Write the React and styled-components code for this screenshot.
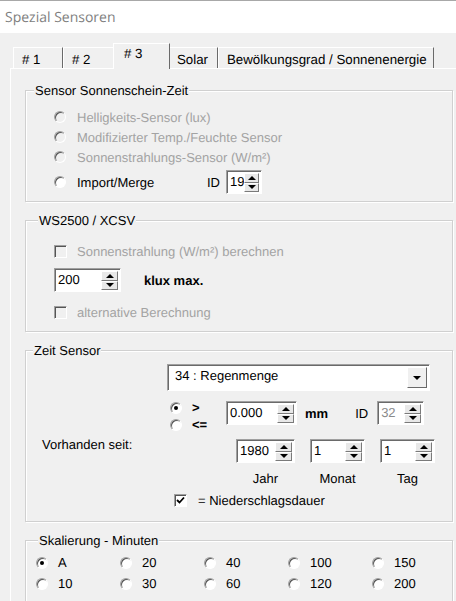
import React from 'react';
import styled, { createGlobalStyle } from 'styled-components';

const GlobalStyle = createGlobalStyle`
  html, body {
    margin: 0;
    padding: 0;
    background: #f0f0f0;
  }
  body {
    font-family: "Liberation Sans", Arial, sans-serif;
    font-size: 13px;
    color: #000;
    overflow: hidden;
    text-rendering: geometricPrecision;
  }
`;

const Window = styled.div`
  width: 456px;
  height: 601px;
  overflow: hidden;
  background: #f0f0f0;
`;

const TitleBar = styled.div`
  height: 32px;
  background: #fff;
  border-top: 1px solid #a8a8a8;
  display: flex;
  align-items: center;
  padding-left: 5px;
  font-family: "Open Sans", "Liberation Sans", sans-serif;
  font-size: 14px;
  color: #808080;
`;

const TabStrip = styled.div`
  height: 35px;
  display: flex;
  align-items: flex-end;
  padding-left: 13px;
`;

const Tab = styled.div`
  position: relative;
  box-sizing: border-box;
  width: ${p => p.$w}px;
  height: ${p => (p.$active ? 26 : 21)}px;
  margin: ${p => (p.$active ? '0 -2px -1px -2px' : '0')};
  z-index: ${p => (p.$active ? 2 : 1)};
  padding: ${p => (p.$active ? '2px 0 0 10px' : '4px 0 0 8px')};
  border-left: 1px solid #fff;
  border-top: 1px solid #fff;
  border-right: 1px solid #6a6a6a;
  background: #f0f0f0;
  font-size: 13.3px;
  line-height: 15px;
  white-space: nowrap;
`;

const Panel = styled.div`
  margin-left: 10px;
  border-left: 1px solid #fff;
  border-top: 1px solid #fff;
  padding: 21px 0 0 14px;
  height: 600px;
`;

const Group = styled.div`
  position: relative;
  box-sizing: border-box;
  width: 428px;
  height: ${p => p.$h}px;
  margin-bottom: 18px;
  border: 1px solid #d0d0d0;
  box-shadow: inset 1px 1px 0 #fff, 1px 1px 0 #fff;
  padding-top: ${p => p.$pt}px;
`;

const Legend = styled.span`
  position: absolute;
  top: -8px;
  left: ${p => p.$left}px;
  padding: 0 1px;
  background: #f0f0f0;
  line-height: 15px;
  white-space: nowrap;
`;

const Row = styled.div`
  display: flex;
  align-items: center;
  height: ${p => p.$h || 20}px;
  margin-top: ${p => p.$mt || 0}px;
  padding-left: ${p => p.$pl || 0}px;
`;

const Label = styled.span`
  margin-left: ${p => p.$ml || 0}px;
  width: ${p => (p.$w ? `${p.$w}px` : 'auto')};
  color: ${p => (p.$disabled ? '#a3a3a3' : '#000')};
  font-weight: ${p => (p.$bold ? 'bold' : 'normal')};
  white-space: nowrap;
  line-height: 15px;
`;

const RadioDot = styled.span`
  position: relative;
  flex: none;
  box-sizing: border-box;
  width: 12px;
  height: 12px;
  border-radius: 50%;
  border: 1px solid;
  border-color: #a0a0a0 #fff #fff #a0a0a0;
  box-shadow: inset 1px 1px 0 #555;
  background: ${p => (p.$disabled ? '#f0f0f0' : '#fff')};

  &::after {
    content: '';
    display: ${p => (p.$checked ? 'block' : 'none')};
    position: absolute;
    left: 3px;
    top: 3px;
    width: 4px;
    height: 4px;
    border-radius: 50%;
    background: #000;
  }
`;

const CheckBox = styled.span`
  flex: none;
  box-sizing: border-box;
  width: 13px;
  height: 13px;
  border: 1px solid;
  border-color: #a0a0a0 #fff #fff #a0a0a0;
  box-shadow: inset 1px 1px 0 #555;
  background: ${p => (p.$disabled ? '#f0f0f0' : '#fff')};
  display: flex;
  align-items: center;
  justify-content: center;
`;

const Field = styled.div`
  flex: none;
  box-sizing: border-box;
  display: flex;
  width: ${p => p.$w}px;
  height: ${p => p.$h || 24}px;
  margin-left: ${p => p.$ml || 0}px;
  margin-top: ${p => p.$mt || 0}px;
  border: 1px solid;
  border-color: #a0a0a0 #fff #fff #a0a0a0;
  box-shadow: inset 1px 1px 0 #6a6a6a;
  background: #fff;
`;

const FieldText = styled.span`
  flex: 1;
  padding: 3px 0 0 ${p => p.$pl || 3}px;
  line-height: 16px;
  color: ${p => (p.$disabled ? '#8a8a8a' : '#000')};
  white-space: nowrap;
`;

const SpinButtons = styled.div`
  display: flex;
  flex-direction: column;
  width: 17px;
  padding: 2px 2px 1px 0;
`;

const SpinBtn = styled.div`
  flex: 1;
  display: flex;
  align-items: center;
  justify-content: center;
  background: #e8e8e8;
  border: 1px solid;
  border-color: #fff #7a7a7a #7a7a7a #fff;
`;

const Triangle = styled.span`
  width: 0;
  height: 0;
  border-left: 4px solid transparent;
  border-right: 4px solid transparent;
  border-${p => (p.$down ? 'top' : 'bottom')}: 4px solid #000;
`;

const DropButton = styled.div`
  width: 18px;
  margin: 2px 2px 2px 0;
  display: flex;
  align-items: center;
  justify-content: center;
  background: #f0f0f0;
  border: 1px solid;
  border-color: #fff #6a6a6a #6a6a6a #fff;
`;

const CompareRow = styled.div`
  display: flex;
  align-items: flex-start;
  height: 34px;
  margin-top: 8px;
  padding-left: 144px;
`;

const RadioStack = styled.div`
  display: flex;
  flex-direction: column;
  width: 56px;
`;

const StackItem = styled.div`
  display: flex;
  align-items: center;
  height: 17px;
`;

const InlineLabel = styled(Label)`
  margin-top: 7px;
`;

const DateRow = styled.div`
  display: flex;
  align-items: flex-start;
  margin-top: 6px;
  padding-left: 16px;
`;

const DateLabel = styled(Label)`
  margin-top: -2px;
`;

const DateColumn = styled.div`
  display: flex;
  flex-direction: column;
  align-items: center;
  margin-right: 15px;
`;

const Caption = styled.span`
  margin-top: 8px;
  line-height: 15px;
`;

const ScaleGrid = styled.div`
  display: grid;
  grid-template-columns: repeat(5, 84px);
  grid-auto-rows: 21px;
  padding-left: 10px;
`;

const ScaleItem = styled.div`
  display: flex;
  align-items: center;
`;

function Radio({ label, checked, disabled, gap = 11, labelWidth, bold }) {
  return (
    <>
      <RadioDot $checked={checked} $disabled={disabled} />
      <Label $ml={gap} $w={labelWidth} $disabled={disabled} $bold={bold}>{label}</Label>
    </>
  );
}

function Check({ label, checked, disabled, gap = 10 }) {
  return (
    <>
      <CheckBox $disabled={disabled}>
        {checked && (
          <svg width="9" height="9" viewBox="0 0 9 9">
            <path d="M1 4 L3.5 6.5 L8 1.5" fill="none" stroke="#000" strokeWidth="1.8" />
          </svg>
        )}
      </CheckBox>
      <Label $ml={gap} $disabled={disabled}>{label}</Label>
    </>
  );
}

function Spin({ value, w, ml, mt, disabled }) {
  return (
    <Field $w={w} $ml={ml} $mt={mt}>
      <FieldText $disabled={disabled}>{value}</FieldText>
      <SpinButtons>
        <SpinBtn><Triangle /></SpinBtn>
        <SpinBtn><Triangle $down /></SpinBtn>
      </SpinButtons>
    </Field>
  );
}

const scale = ['A', '20', '40', '100', '150', '10', '30', '60', '120', '200'];

export default function App() {
  return (
    <Window>
      <GlobalStyle />
      <TitleBar>Spezial Sensoren</TitleBar>
      <TabStrip>
        <Tab $w={50}># 1</Tab>
        <Tab $w={52}># 2</Tab>
        <Tab $w={57} $active># 3</Tab>
        <Tab $w={50}>Solar</Tab>
        <Tab $w={216}>Bewölkungsgrad / Sonnenenergie</Tab>
      </TabStrip>
      <Panel>
        <Group $h={112} $pt={16}>
          <Legend $left={8}>Sensor Sonnenschein-Zeit</Legend>
          <Row $pl={28}><Radio label="Helligkeits-Sensor (lux)" disabled /></Row>
          <Row $pl={28}><Radio label="Modifizierter Temp./Feuchte Sensor" disabled /></Row>
          <Row $pl={28}><Radio label="Sonnenstrahlungs-Sensor (W/m²)" disabled /></Row>
          <Row $pl={28} $h={24} $mt={3}>
            <Radio label="Import/Merge" labelWidth={130} />
            <Label>ID</Label>
            <Spin value="19" w={36} ml={6} />
          </Row>
        </Group>

        <Group $h={112} $pt={20}>
          <Legend $left={12}>WS2500 / XCSV</Legend>
          <Row $pl={28}><Check label="Sonnenstrahlung (W/m²) berechnen" disabled /></Row>
          <Row $pl={28} $h={24} $mt={7}>
            <Spin value="200" w={67} />
            <Label $ml={23} $bold>klux max.</Label>
          </Row>
          <Row $pl={28} $mt={10}><Check label="alternative Berechnung" disabled /></Row>
        </Group>

        <Group $h={172} $pt={13}>
          <Legend $left={7}>Zeit Sensor</Legend>
          <Row $pl={141} $h={27}>
            <Field $w={263} $h={27}>
              <FieldText $pl={7}>34 : Regenmenge</FieldText>
              <DropButton><Triangle $down /></DropButton>
            </Field>
          </Row>
          <CompareRow>
            <RadioStack>
              <StackItem><Radio label=">" checked gap={10} bold /></StackItem>
              <StackItem><Radio label="<=" gap={10} bold /></StackItem>
            </RadioStack>
            <Spin value="0.000" w={71} mt={2} />
            <InlineLabel $ml={8} $bold>mm</InlineLabel>
            <InlineLabel $ml={27}>ID</InlineLabel>
            <Spin value="32" w={47} ml={9} mt={2} disabled />
          </CompareRow>
          <DateRow>
            <DateLabel $w={194}>Vorhanden seit:</DateLabel>
            <DateColumn>
              <Spin value="1980" w={59} />
              <Caption>Jahr</Caption>
            </DateColumn>
            <DateColumn>
              <Spin value="1" w={55} />
              <Caption>Monat</Caption>
            </DateColumn>
            <DateColumn>
              <Spin value="1" w={55} />
              <Caption>Tag</Caption>
            </DateColumn>
          </DateRow>
          <Row $pl={148} $h={17} $mt={6}>
            <Check label="= Niederschlagsdauer" checked gap={11} />
          </Row>
        </Group>

        <Group $h={80} $pt={11}>
          <Legend $left={12}>Skalierung - Minuten</Legend>
          <ScaleGrid>
            {scale.map(v => (
              <ScaleItem key={v}>
                <Radio label={v} checked={v === 'A'} gap={10} />
              </ScaleItem>
            ))}
          </ScaleGrid>
        </Group>
      </Panel>
    </Window>
  );
}
